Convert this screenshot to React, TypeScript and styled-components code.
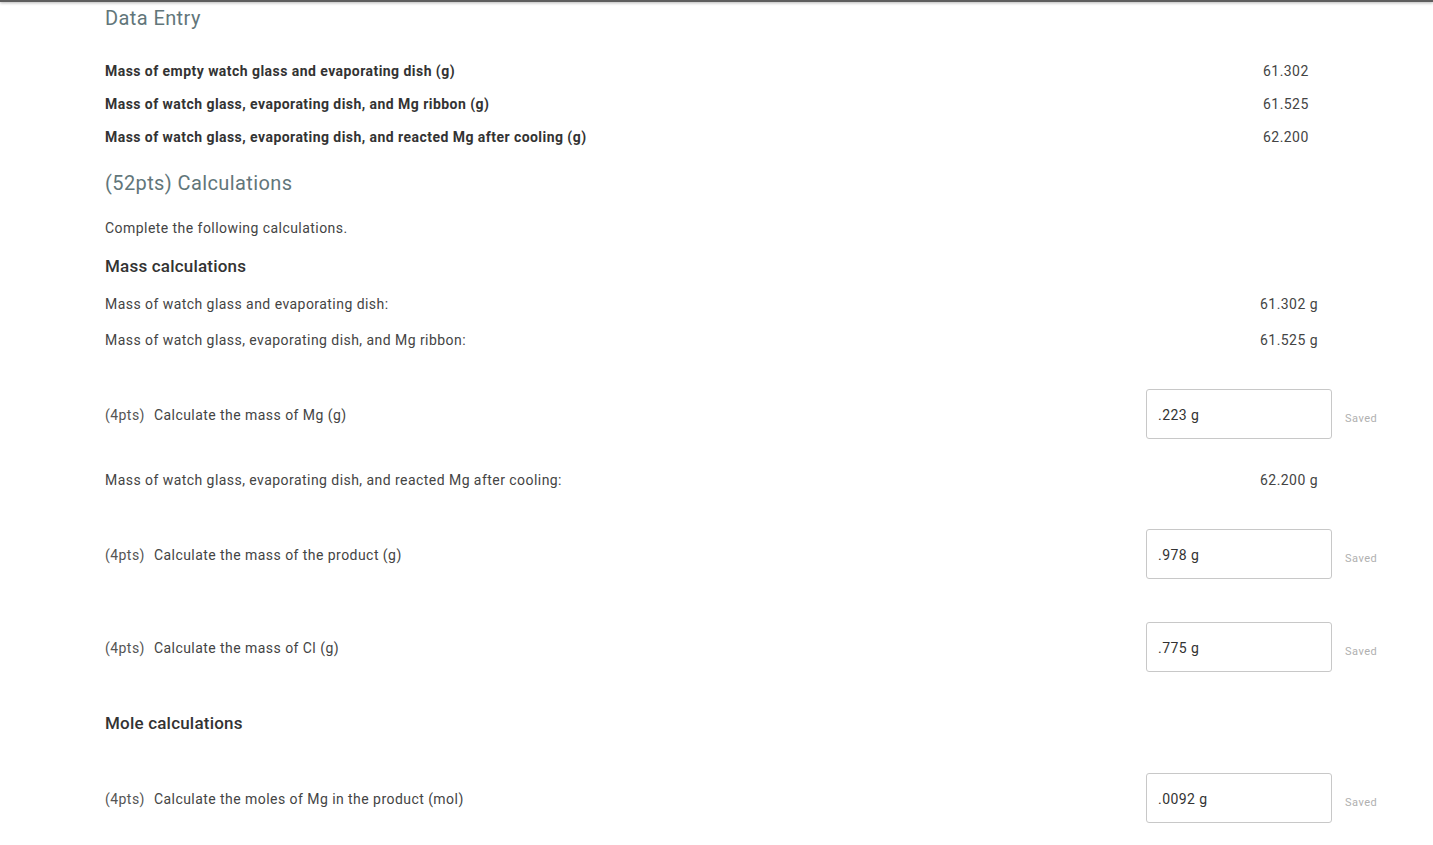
import React from "react";
import styled, { createGlobalStyle } from "styled-components";

const Global = createGlobalStyle`
  html, body { margin: 0; padding: 0; background: #fff; }
  body { font-family: Roboto, "Noto Sans", Arial, sans-serif; color: #333; }
`;

const TopBar = styled.div`
  height: 2px;
  background: #5e5e5e;
  box-shadow: 0 1px 3px rgba(0, 0, 0, 0.35);
`;

const Content = styled.main`
  padding: 0 42px 24px 105px;
`;

const Heading = styled.h2<{ $top: number }>`
  margin: ${(p) => p.$top}px 0 0;
  font-size: 20px;
  line-height: 24px;
  font-weight: 400;
  letter-spacing: 0.4px;
  color: #62767a;
`;

const SubHeading = styled.h3<{ $top: number }>`
  margin: ${(p) => p.$top}px 0 0;
  font-size: 17px;
  line-height: 24px;
  font-weight: 500;
  letter-spacing: 0.2px;
  color: #333;
`;

const Intro = styled.p<{ $top: number }>`
  margin: ${(p) => p.$top}px 0 0;
  font-size: 14px;
  line-height: 20px;
  letter-spacing: 0.45px;
  color: #444;
`;

const DataTable = styled.div`
  margin-top: 24px;
  display: flex;
  flex-direction: column;
`;

const Grid = styled.div<{ $top?: number; $h: number }>`
  display: grid;
  grid-template-columns: 1fr 186px 46px;
  column-gap: 13px;
  align-items: center;
  height: ${(p) => p.$h}px;
  margin-top: ${(p) => p.$top ?? 0}px;
`;

const DataLabel = styled.div`
  font-size: 14px;
  font-weight: 700;
  letter-spacing: 0.45px;
  color: #333;
`;

const Label = styled.div<{ $shift?: number }>`
  font-size: 14px;
  letter-spacing: 0.45px;
  color: #444;
  display: flex;
  gap: 9px;
  padding-top: ${(p) => p.$shift ?? 0}px;
`;

const Value = styled.div<{ $pad: number }>`
  font-size: 14px;
  letter-spacing: 0.45px;
  color: #444;
  padding-left: ${(p) => p.$pad}px;
`;

const Points = styled.span`
  color: #555;
`;

const Input = styled.input`
  box-sizing: border-box;
  width: 186px;
  height: 50px;
  border: 1px solid #c8c8c8;
  border-radius: 3px;
  padding: 2px 11px 0;
  font-family: inherit;
  font-size: 14px;
  letter-spacing: 0.45px;
  color: #333;
  background: #fff;
  outline: none;
`;

const Saved = styled.span`
  font-size: 11px;
  letter-spacing: 0.5px;
  color: #b0b0b0;
  padding-top: 8px;
`;

const dataRows = [
  ["Mass of empty watch glass and evaporating dish (g)", "61.302"],
  ["Mass of watch glass, evaporating dish, and Mg ribbon (g)", "61.525"],
  ["Mass of watch glass, evaporating dish, and reacted Mg after cooling (g)", "62.200"],
];

const InfoRow = ({ label, value, top }: { label: string; value: string; top?: number }) => (
  <Grid $h={36} $top={top}>
    <Label>{label}</Label>
    <Value $pad={114}>{value}</Value>
  </Grid>
);

const QuestionRow = ({ label, value, top }: { label: string; value: string; top: number }) => (
  <Grid $h={50} $top={top}>
    <Label $shift={2}>
      <Points>(4pts)</Points>
      <span>{label}</span>
    </Label>
    <Input defaultValue={value} />
    <Saved>Saved</Saved>
  </Grid>
);

export default function App() {
  return (
    <>
      <Global />
      <TopBar />
      <Content>
        <Heading $top={4}>Data Entry</Heading>
        <DataTable>
          {dataRows.map(([l, v]) => (
            <Grid key={l} $h={33}>
              <DataLabel>{l}</DataLabel>
              <Value $pad={117}>{v}</Value>
            </Grid>
          ))}
        </DataTable>
        <Heading $top={18}>(52pts) Calculations</Heading>
        <Intro $top={23}>Complete the following calculations.</Intro>
        <SubHeading $top={16}>Mass calculations</SubHeading>
        <InfoRow top={8} label="Mass of watch glass and evaporating dish:" value="61.302 g" />
        <InfoRow label="Mass of watch glass, evaporating dish, and Mg ribbon:" value="61.525 g" />
        <QuestionRow top={31} label="Calculate the mass of Mg (g)" value=".223 g" />
        <InfoRow
          top={23}
          label="Mass of watch glass, evaporating dish, and reacted Mg after cooling:"
          value="62.200 g"
        />
        <QuestionRow top={31} label="Calculate the mass of the product (g)" value=".978 g" />
        <QuestionRow top={43} label="Calculate the mass of Cl (g)" value=".775 g" />
        <SubHeading $top={39}>Mole calculations</SubHeading>
        <QuestionRow top={38} label="Calculate the moles of Mg in the product (mol)" value=".0092 g" />
      </Content>
    </>
  );
}
